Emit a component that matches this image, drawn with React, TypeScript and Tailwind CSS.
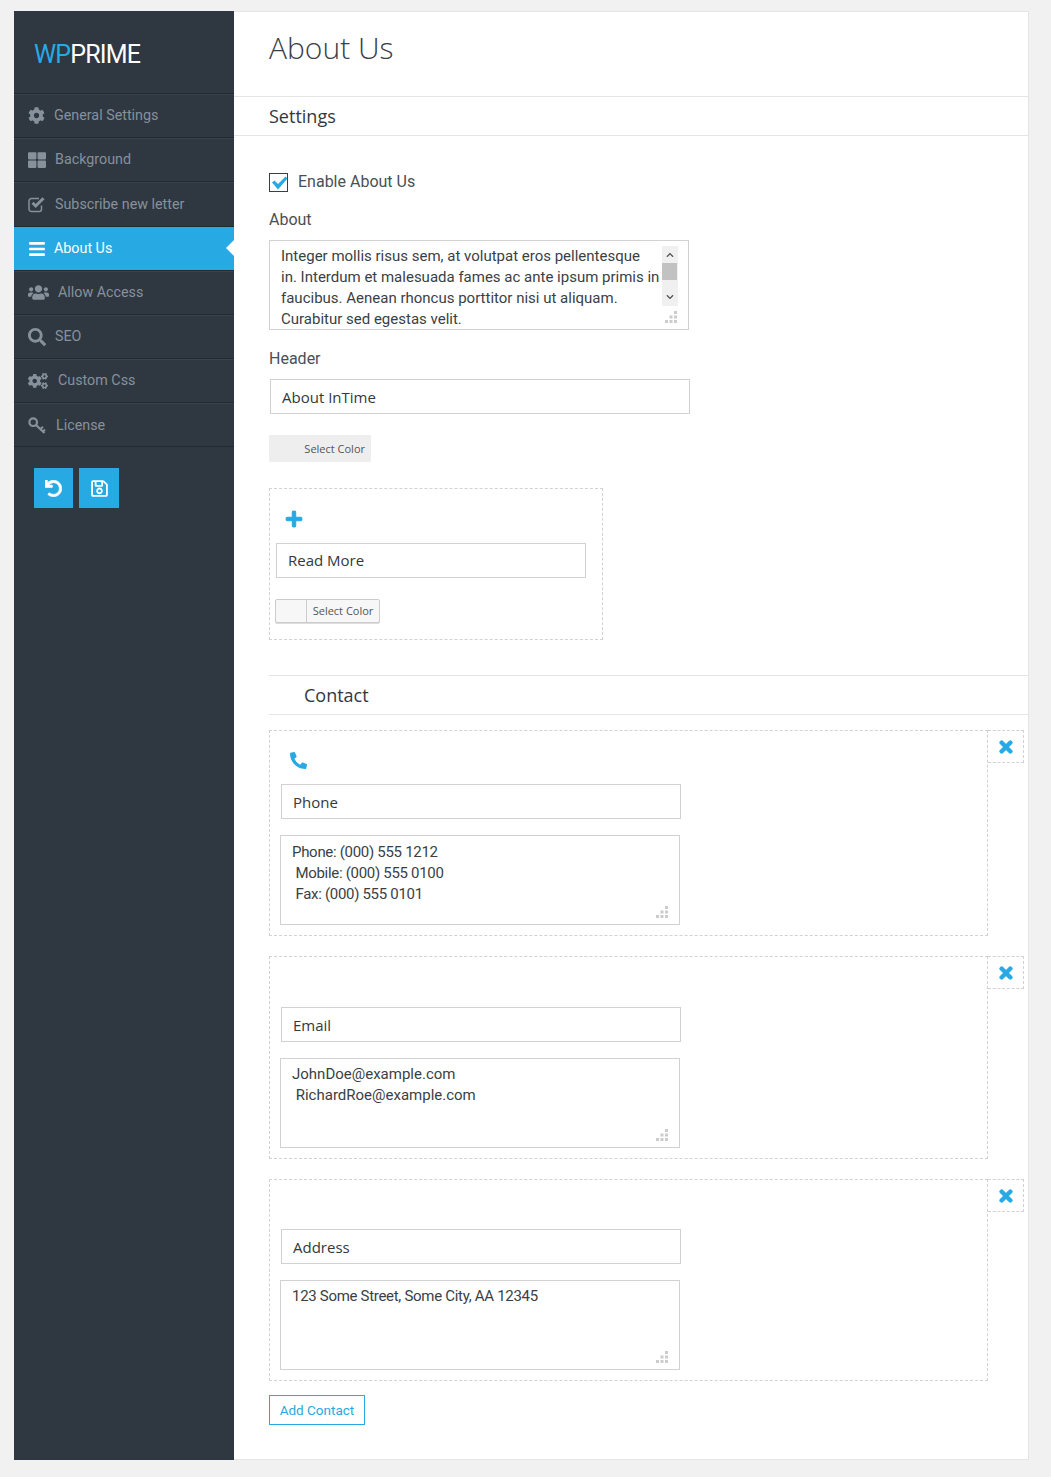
import React from 'react';
import {
    FaCog, FaThLarge, FaBars, FaUsers, FaSearch, FaCogs,
    FaUndo, FaRegSave, FaPlus, FaPhoneAlt, FaTimes, FaChevronUp, FaChevronDown,
} from 'react-icons/fa';

const CheckIcon = () => (
    <svg width="18" height="17" viewBox="0 0 18 17" fill="none">
        <path d="M13.500 9.500 V13 a2.500 2.500 0 0 1 -2.500 2.500 H3.500 A2.500 2.500 0 0 1 1 13 V5 A2.500 2.500 0 0 1 3.500 2.500 H11" stroke="currentColor" strokeWidth="1.500" />
        <path d="M4.500 6.800 L7.700 10 L15.500 2.200" stroke="currentColor" strokeWidth="3" />
    </svg>
);

const KeyIcon = () => (
    <svg width="18" height="18" viewBox="0 0 18 18" fill="none" stroke="currentColor">
        <circle cx="5.200" cy="5.200" r="3.800" strokeWidth="2.200" />
        <path d="M8 8 L16.500 16" strokeWidth="2.200" />
        <path d="M12.500 12 L15 9.800 M15 14.500 L17 12.500" strokeWidth="2" />
    </svg>
);

const menu = [
    { label: 'General Settings', icon: <FaCog className="text-[17px]" />, box: 'w-[26px]', h: 'h-[44px]' },
    { label: 'Background', icon: <FaThLarge className="text-[18px]" />, box: 'w-[27px]', h: 'h-[44px]' },
    { label: 'Subscribe new letter', icon: <CheckIcon />, box: 'w-[27px]', h: 'h-[45px] pt-[1px]' },
    { label: 'About Us', icon: <FaBars className="text-[18px]" />, box: 'w-[26px]', h: 'h-[44px]', active: true },
    { label: 'Allow Access', icon: <FaUsers className="text-[21px]" />, box: 'w-[30px]', h: 'h-[44px]' },
    { label: 'SEO', icon: <FaSearch className="text-[18px]" />, box: 'w-[27px]', h: 'h-[44px]' },
    { label: 'Custom Css', icon: <FaCogs className="text-[20px]" />, box: 'w-[30px]', h: 'h-[44px]' },
    { label: 'License', icon: <KeyIcon />, box: 'w-[28px]', h: 'h-[44px] pt-[2px]' },
];

const squareFont = 'font-["Roboto",sans-serif]';
const openSans = 'font-["Open_Sans",sans-serif]';

const Grip = () => (
    <svg className="absolute right-[12px] bottom-[7px]" width="12" height="12" viewBox="0 0 12 12" fill="#cccccc">
        <rect x="9" y="0" width="3" height="3" />
        <rect x="4.500" y="4.500" width="3" height="3" />
        <rect x="9" y="4.500" width="3" height="3" />
        <rect x="0" y="9" width="3" height="3" />
        <rect x="4.500" y="9" width="3" height="3" />
        <rect x="9" y="9" width="3" height="3" />
    </svg>
);

const TextBox: React.FC<{ value: string; className?: string; textClass?: string }> = ({ value, className, textClass }) => (
    <div className={`relative h-[90px] w-[400px] ${className || ''}`}>
        <textarea
            readOnly
            value={value}
            wrap="off"
            className={`block h-full w-full resize-none overflow-hidden border border-[#d2d2d2] bg-white px-[11px] py-[5px] text-[15px] leading-[21px] text-[#3a3f45] outline-none ${squareFont} ${textClass || ''}`}
        />
        <Grip />
    </div>
);

const TextInput: React.FC<{ value: string; className?: string }> = ({ value, className }) => (
    <input
        readOnly
        value={value}
        className={`block h-[35px] border border-[#d2d2d2] bg-white px-[11px] text-[15px] text-[#33383e] outline-none ${openSans} ${className || ''}`}
    />
);

const ContactCard: React.FC<{
    icon?: React.ReactNode;
    title: string;
    text: string;
    topClass: string;
    heightClass: string;
    textClass?: string;
    className?: string;
}> = ({ icon, title, text, topClass, heightClass, textClass, className }) => (
    <div className={`relative w-[719px] border border-dashed border-[#d2d2d2] ${heightClass} ${className || ''}`}>
        <div className="absolute top-[-1px] left-[718px] flex h-[33px] w-[36px] items-center justify-center border border-l-0 border-dashed border-[#d2d2d2] text-[#27a9e3]">
            <FaTimes className="text-[18px] stroke-[30]" />
        </div>
        <div className={`flex items-center pl-[20px] text-[#27a9e3] ${topClass}`}>{icon}</div>
        <TextInput value={title} className="ml-[11px] w-[400px]" />
        <TextBox value={text} textClass={textClass} className="mt-[16px] ml-[10px]" />
    </div>
);

const App: React.FC = () => {
    return (
        <div className="flex h-[1477px] bg-[#f1f1f1] pt-[11px] pb-[17px] pl-[14px]">
            {/* Sidebar */}
            <aside className={`flex w-[220px] shrink-0 flex-col bg-[#2f3741] ${squareFont}`}>
                <div className="flex h-[82px] items-center pt-[5px] pl-[20px] text-[25px] leading-none tracking-[-0.85px]">
                    <span className="text-[#27a9e3]">WP</span>
                    <span className="text-white">PRIME</span>
                </div>
                <nav className="border-b border-[#232931]">
                    {menu.map((item) => (
                        <div
                            key={item.label}
                            className={`relative flex items-center pl-[14px] text-[14.300px] ${item.h} ${
                                item.active
                                    ? 'border-t border-[#232931] bg-[#27a9e3] text-white shadow-[inset_0_1px_0_#27a9e3]'
                                    : 'border-t border-[#232931] text-[#87919b] shadow-[inset_0_1px_0_#3a424c]'
                            }`}
                        >
                            <span className={`flex shrink-0 items-center ${item.box}`}>{item.icon}</span>
                            <span>{item.label}</span>
                            {item.active && (
                                <span className="absolute top-[13px] right-0 h-0 w-0 border-y-[8px] border-r-[8px] border-y-transparent border-r-white" />
                            )}
                        </div>
                    ))}
                </nav>
                <div className="mt-[21px] flex gap-[6px] pl-[20px] text-white">
                    <button className="flex h-[40px] w-[39px] items-center justify-center bg-[#27a9e3]">
                        <FaUndo className="text-[17px] stroke-[20]" />
                    </button>
                    <button className="flex h-[40px] w-[40px] items-center justify-center bg-[#27a9e3]">
                        <FaRegSave className="text-[19px]" />
                    </button>
                </div>
            </aside>

            {/* Main */}
            <main className="w-[795px] shrink-0 border-y border-r border-[#e5e5e5] bg-white">
                <h1 className={`flex h-[84px] items-start pt-[16px] pl-[35px] text-[30px] leading-[40px] font-light text-[#3a4047] ${openSans}`}>
                    About Us
                </h1>
                <h2 className={`flex h-[40px] items-center border-y border-[#e5e5e5] pl-[35px] text-[18px] text-[#33383e] ${openSans}`}>
                    Settings
                </h2>

                <div className="pl-[35px]">
                    <label className={`mt-[37px] flex h-[19px] items-center gap-[10px] text-[16px] text-[#4a4f55] ${squareFont}`}>
                        <span className="relative block h-[19px] w-[19px] border border-[#3a3f45] bg-white">
                            <svg className="absolute top-[2px] left-[1px]" width="17" height="14" viewBox="0 0 17 14" fill="#27a9e3">
                                <path d="M1 6.500 L3.500 4.500 L7 8 L14.500 0.500 L16.500 2.500 L7 13.500 Z" />
                            </svg>
                        </span>
                        <span className="-mt-[2px]">Enable About Us</span>
                    </label>

                    <div className={`mt-[18px] text-[16px] leading-[20px] text-[#4a4f55] ${squareFont}`}>About</div>
                    <div className="relative mt-[10px] w-[420px]">
                        <TextBox
                            className="!w-[420px]"
                            value={'Integer mollis risus sem, at volutpat eros pellentesque\nin. Interdum et malesuada fames ac ante ipsum primis in\nfaucibus. Aenean rhoncus porttitor nisi ut aliquam.\nCurabitur sed egestas velit.\nNullam quis risus eget urna mollis ornare vel eu leo.'}
                        />
                        {/* scrollbar over the textarea */}
                        <div className="absolute top-[6px] left-[393px] flex h-[60px] w-[16px] flex-col items-center justify-between bg-[#f0f0f0] py-[5px] text-[#505050]">
                            <FaChevronUp className="text-[8px]" />
                            <FaChevronDown className="text-[8px]" />
                        </div>
                        <div className="absolute top-[23px] left-[393px] h-[17px] w-[15px] bg-[#c2c2c2]" />
                    </div>

                    <div className={`mt-[19px] text-[16px] leading-[20px] text-[#4a4f55] ${squareFont}`}>Header</div>
                    <TextInput value="About InTime" className="mt-[10px] ml-[1px] w-[420px]" />

                    <button className={`mt-[21px] flex h-[27px] w-[102px] items-center justify-end bg-[#eeeeee] pt-[2px] pr-[6px] text-[11px] text-[#555] ${openSans}`}>
                        Select Color
                    </button>

                    <div className="mt-[26px] h-[152px] w-[334px] border border-dashed border-[#d2d2d2]">
                        <div className="flex h-[54px] items-center pt-[6px] pl-[15px] text-[#27a9e3]">
                            <FaPlus className="text-[18px] stroke-[30]" />
                        </div>
                        <TextInput value="Read More" className="ml-[6px] w-[310px] pb-[2px]" />
                        <div className={`mt-[21px] ml-[5px] flex h-[24px] w-[105px] overflow-hidden rounded-[2px] border border-[#cccccc] bg-[#f7f7f7] text-[11px] text-[#555] shadow-[0_1px_0_#ddd] ${openSans}`}>
                            <span className="w-[31px] border-r border-[#cccccc]" />
                            <span className="flex flex-1 items-center justify-center">Select Color</span>
                        </div>
                    </div>

                    <h2 className={`mt-[35px] flex h-[40px] items-center border-y border-[#e5e5e5] pl-[35px] text-[18px] text-[#33383e] ${openSans}`}>
                        Contact
                    </h2>

                    <ContactCard
                        className="mt-[15px]"
                        heightClass="h-[206px]"
                        topClass="h-[53px] pt-[6px]"
                        icon={<FaPhoneAlt className="text-[17px]" />}
                        title="Phone"
                        text={'Phone: (000) 555 1212\n Mobile: (000) 555 0100\n Fax: (000) 555 0101'}
                        textClass="tracking-[-0.3px] !pt-[6px]"
                    />
                    <ContactCard
                        className="mt-[20px]"
                        heightClass="h-[203px]"
                        topClass="h-[50px]"
                        title="Email"
                        text={'JohnDoe@example.com\n RichardRoe@example.com'}
                    />
                    <ContactCard
                        className="mt-[20px]"
                        heightClass="h-[202px]"
                        topClass="h-[49px]"
                        title="Address"
                        text="123 Some Street, Some City, AA 12345"
                        textClass="tracking-[-0.3px]"
                    />

                    <button className={`mt-[14px] flex h-[30px] w-[96px] items-center justify-center border border-[#27a9e3] text-[13.500px] text-[#27a9e3] ${squareFont}`}>
                        Add Contact
                    </button>
                </div>
            </main>
        </div>
    );
};

export default App;
